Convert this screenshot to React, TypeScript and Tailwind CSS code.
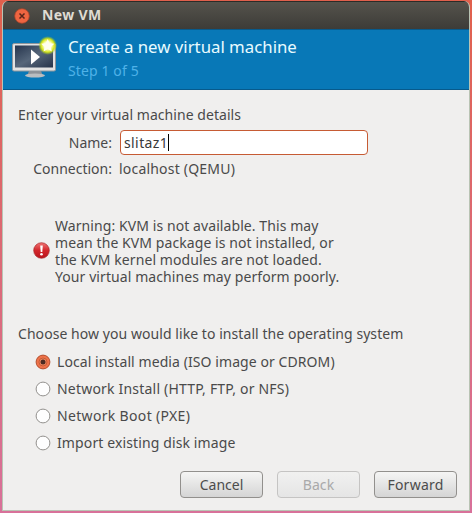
import React from 'react';

function MonitorIcon() {
  return (
    <svg className="block h-[44px] w-[50px]" viewBox="0 0 50 44">
      <defs>
        <linearGradient id="screen" x1="0" y1="0" x2="1" y2="1">
          <stop offset="0" stopColor="#25344c" />
          <stop offset="0.5" stopColor="#56667a" />
          <stop offset="1" stopColor="#26334a" />
        </linearGradient>
        <radialGradient id="glow">
          <stop offset="0.4" stopColor="#ffffc0" />
          <stop offset="0.7" stopColor="#d4e51a" />
          <stop offset="1" stopColor="#9cc41c" stopOpacity="0" />
        </radialGradient>
      </defs>
      <path d="M18 35h12l2 5H16z" fill="#8d9298" />
      <ellipse cx="24" cy="39.500" rx="10" ry="2" fill="#b9bdc0" />
      <rect x="1.500" y="7.500" width="43" height="27.500" rx="1.500" fill="#e2e2e2" stroke="#8f969c" />
      <rect x="4" y="9.500" width="38" height="22" fill="url(#screen)" />
      <path d="M20 13.500v15l9-7.500z" fill="#fff" />
      <circle cx="36.700" cy="9.500" r="9.500" fill="url(#glow)" />
      <path d="M36.700 3l1.900 4.300 4.700.5-3.500 3.100 1 4.600-4.100-2.400-4.100 2.400 1-4.600-3.500-3.100 4.700-.5z" fill="#fffff0" />
    </svg>
  );
}

function ErrorIcon() {
  return (
    <svg className="-mt-[2px] block h-[17px] w-[17px] shrink-0" viewBox="0 0 17 17">
      <defs>
        <linearGradient id="alert" x1="0" y1="0" x2="0" y2="1">
          <stop offset="0" stopColor="#ef7474" />
          <stop offset="0.5" stopColor="#d3262b" />
          <stop offset="1" stopColor="#b8141c" />
        </linearGradient>
      </defs>
      <circle cx="8.500" cy="8.500" r="7.800" fill="url(#alert)" stroke="#a92a2c" strokeWidth="0.700" />
      <path d="M7.200 3.500h2.600L9.300 10H7.700z" fill="#fff" />
      <circle cx="8.500" cy="12.300" r="1.300" fill="#fff" />
    </svg>
  );
}

function Radio({ checked }: { checked?: boolean }) {
  return (
    <svg className="block h-[16px] w-[16px] shrink-0" viewBox="0 0 16 16">
      <circle cx="8" cy="8" r="6.900" fill={checked ? '#ee7249' : '#fefefe'} stroke={checked ? '#b5502f' : '#93918e'} />
      {checked && <circle cx="8" cy="8" r="4" fill="#f38a60" stroke="#bd522e" strokeWidth="0.800" />}
      {checked && <circle cx="8" cy="8" r="2.500" fill="#4c2b22" />}
    </svg>
  );
}

const options = [
  { label: 'Local install media (ISO image or CDROM)', track: 'tracking-[0.08px]', checked: true },
  { label: 'Network Install (HTTP, FTP, or NFS)', track: 'tracking-[0.2px]' },
  { label: 'Network Boot (PXE)', track: 'tracking-[0.33px]' },
  { label: 'Import existing disk image', track: 'tracking-[0.12px]' },
];

const warning = [
  'Warning: KVM is not available. This may',
  'mean the KVM package is not installed, or',
  'the KVM kernel modules are not loaded.',
  'Your virtual machines may perform poorly.',
];

const buttons = [
  { label: 'Cancel', style: 'border-[#92908d] text-[#4c4c4c] from-[#f5f5f4] to-[#d5d5d5]' },
  { label: 'Back', style: 'border-[#c5c4c3] text-[#a9a9a9] from-[#f1f1f0] to-[#e5e5e5] tracking-[0.1px]' },
  { label: 'Forward', style: 'border-[#92908d] text-[#4c4c4c] from-[#f5f5f4] to-[#d5d5d5] tracking-[0.25px]' },
];

export default function App() {
  return (
    <div className="h-[513px] w-[472px] bg-linear-to-b from-[#e0604c] to-[#d8719a] pt-px pr-[2px] pb-[2px] pl-[2px] font-['Noto_Sans',sans-serif] text-[14px] text-[#4a4a4a]">
      <div className="flex h-[510px] flex-col overflow-hidden rounded-t-[6px] border-x border-b border-[#b9c4b4] bg-[#f0efee]">
        <header className="-mx-px flex h-[28px] shrink-0 items-center border-t border-[#2c2b27] bg-linear-to-b from-[#55534c] to-[#3d3c38] pl-[12px]">
          <svg className="block h-[16px] w-[16px]" viewBox="0 0 16 16">
            <circle cx="8" cy="8" r="7.300" fill="#ee6541" stroke="#a9442b" strokeWidth="0.800" />
            <path d="M5.500 5.500l5 5m0-5l-5 5" stroke="#59251a" strokeWidth="1.500" />
          </svg>
          <h1 className="-mt-[2px] ml-[12px] text-[14px] leading-[20px] font-bold tracking-[0.35px] text-[#dfdbd2]">New VM</h1>
        </header>
        <section className="-mr-px flex h-[61px] shrink-0 border-y border-[#075a8c] bg-[#0878b7] pl-[8px]">
          <div className="pt-[6px]"><MonitorIcon /></div>
          <div className="ml-[7px] whitespace-nowrap">
            <h2 className="mt-[6px] text-[16.8px] leading-[22px] text-[#e8fbff]">Create a new virtual machine</h2>
            <p className="mt-[2px] leading-[22px] tracking-[0.12px] text-[#4fb2e8]">Step 1 of 5</p>
          </div>
        </section>
        <main className="pt-[15px] pl-[15px] whitespace-nowrap">
          <p className="leading-[20px] tracking-[0.05px]">Enter your virtual machine details</p>
          <div className="mt-[5px] flex h-[25px] items-center">
            <span className="w-[94px] text-right">Name:</span>
            <div className="ml-[8px] flex h-[25px] w-[248px] items-center rounded-[4px] border border-[#c65b34] bg-white pl-[3px] text-[#393939]">
              <span className="tracking-[0.4px]">slitaz1</span>
              <span className="h-[17px] w-px bg-black" />
            </div>
          </div>
          <div className="mt-[4px] flex leading-[20px]">
            <span className="w-[94px] text-right">Connection:</span>
            <span className="ml-[7px] tracking-[0.2px]">localhost (QEMU)</span>
          </div>
          <div className="mt-[38px] flex h-[68px] items-center pl-[15px]">
            <ErrorIcon />
            <p className="ml-[5px] leading-[17px] tracking-[0.08px] whitespace-pre-line">{warning.join('\n')}</p>
          </div>
          <p className="mt-[39px] leading-[20px] tracking-[0.06px]">Choose how you would like to install the operating system</p>
          <div className="mt-[4px] pl-[17px]">
            {options.map((option) => (
              <label key={option.label} className="flex h-[27px] items-center">
                <Radio checked={option.checked} />
                <span className={`ml-[6px] ${option.track}`}>{option.label}</span>
              </label>
            ))}
          </div>
          <div className="mt-[15px] flex gap-[14px] pl-[162px]">
            {buttons.map((button) => (
              <button key={button.label} className={`flex h-[27px] w-[83px] items-center justify-center rounded-[4px] border bg-linear-to-b ${button.style}`}>
                {button.label}
              </button>
            ))}
          </div>
        </main>
      </div>
    </div>
  );
}
